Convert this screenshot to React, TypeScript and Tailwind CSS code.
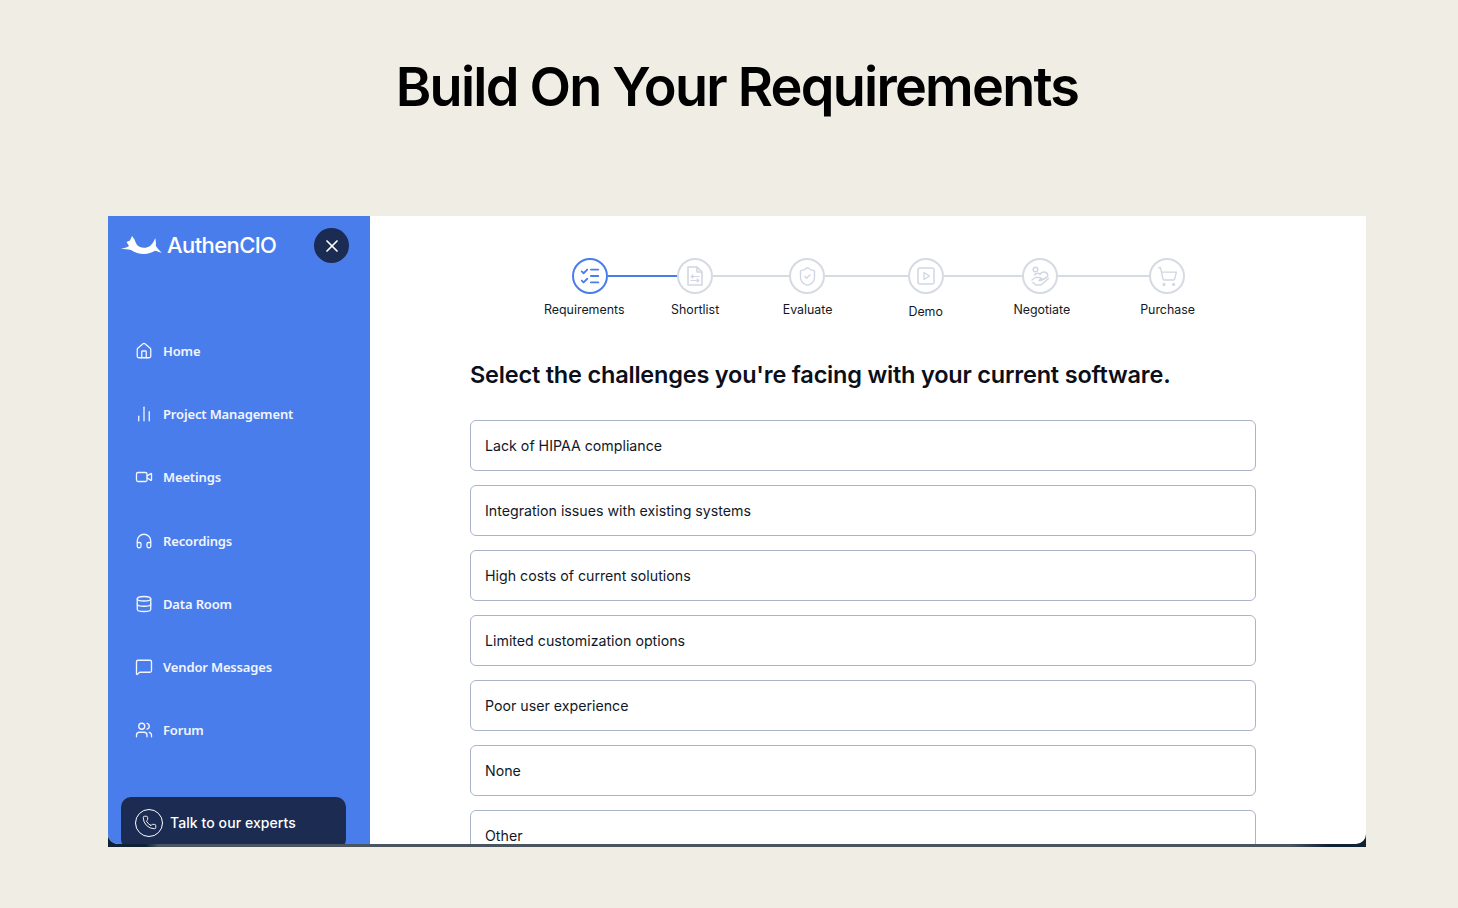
import React from "react";
import { House, ChartNoAxesColumn, Video, Headphones, Database, MessageSquare, Users, Phone, X, ListChecks, ShieldCheck, ShoppingCart } from "lucide-react";

const nav = [
  { label: "Home", Icon: House },
  { label: "Project Management", Icon: ChartNoAxesColumn },
  { label: "Meetings", Icon: Video },
  { label: "Recordings", Icon: Headphones },
  { label: "Data Room", Icon: Database },
  { label: "Vendor Messages", Icon: MessageSquare },
  { label: "Forum", Icon: Users },
];

const options = [
  "Lack of HIPAA compliance",
  "Integration issues with existing systems",
  "High costs of current solutions",
  "Limited customization options",
  "Poor user experience",
  "None",
  "Other",
];

function Logo() {
  return (
    <svg width="41" height="19" viewBox="0 0 41 19" fill="white" aria-hidden="true">
      <path d="M0 13 C3 12 6 11.5 8 10 L5.5 6 L9 4.5 L11 0 L13.5 3.5 C14.5 6 15.5 9 18 10.5 C22 12.5 26 12 29 10 C31.5 8 33 5 34.3 2 C35 6 35 8 34.8 10 C36.5 12.5 39 15 41 17 C38 16 36 15 34 14.7 C31 16.5 27 18 23 18 C18 18 14 16.5 10 14 C7 13 3 13 0 13 Z" />
    </svg>
  );
}

function DocIcon() {
  return (
    <svg width="18" height="20" viewBox="0 0 18 20" fill="none" stroke="#d1d7e2" strokeWidth="1.6" aria-hidden="true">
      <path d="M2 1 H11 L16 6 V19 H2 Z" strokeLinejoin="round" />
      <path d="M11 1 V6 H16" strokeLinejoin="round" />
      <path d="M5 10.5 H13 M5 14.5 H13 M7 9 L5 10.5 L7 12 M11 13 L13 14.5 L11 16" strokeLinecap="round" strokeLinejoin="round" strokeWidth="1.2" />
    </svg>
  );
}

function PlayBox() {
  return (
    <svg width="18" height="18" viewBox="0 0 18 18" fill="none" stroke="#d1d7e2" strokeWidth="1.5" aria-hidden="true">
      <rect x="1" y="1" width="16" height="16" rx="2" />
      <path d="M7 5.5 L12.5 9 L7 12.5 Z" strokeLinejoin="round" strokeWidth="1.3" />
    </svg>
  );
}

function HandIcon() {
  return (
    <svg width="22" height="22" viewBox="0 0 22 22" fill="none" stroke="#d1d7e2" strokeWidth="1.5" strokeLinecap="round" strokeLinejoin="round" aria-hidden="true">
      <circle cx="6.5" cy="4.5" r="2.3" />
      <path d="M5.5 10 C8 7.5 10 8 11 9.5 C12 7 15 6.5 17 7.5 C19.5 9 19 11.5 17.5 12.5 L12 15.5" />
      <path d="M3 15 L6.5 12.5 H10.5 L13 14 L10 15.5" />
      <path d="M4 17.5 L7 20 H12 L19.5 13.5" />
    </svg>
  );
}

function Circle({ active, children }: { active?: boolean; children: React.ReactNode }) {
  return (
    <div className={active
      ? "flex h-9 w-9 shrink-0 items-center justify-center rounded-full border-2 border-[#4a7dec] bg-white"
      : "flex h-9 w-9 shrink-0 items-center justify-center rounded-full border-2 border-[#d5dae3] bg-white"}>
      {children}
    </div>
  );
}

function Stepper() {
  return (
    <div className="flex flex-col">
      <div className="ml-[202px] flex items-center">
        <Circle active><ListChecks size={22} color="#4a7dec" strokeWidth={2} /></Circle>
        <div className="h-[2px] w-[69px] bg-[#4a7dec]" />
        <Circle><DocIcon /></Circle>
        <div className="h-[2px] w-[76px] bg-[#d5dae3]" />
        <Circle><ShieldCheck size={21} color="#d1d7e2" strokeWidth={1.6} /></Circle>
        <div className="h-[2px] w-[83px] bg-[#d5dae3]" />
        <Circle><PlayBox /></Circle>
        <div className="h-[2px] w-[78px] bg-[#d5dae3]" />
        <Circle><HandIcon /></Circle>
        <div className="h-[2px] w-[91px] bg-[#d5dae3]" />
        <Circle><ShoppingCart size={21} color="#d1d7e2" strokeWidth={1.6} /></Circle>
      </div>
      <div className="mt-[7px] flex items-start text-[12.4px] leading-[18px] text-[#111827]">
        <span className="ml-[174px]">Requirements</span>
        <span className="ml-[46.5px]">Shortlist</span>
        <span className="ml-[63.5px]">Evaluate</span>
        <span className="ml-[76px] mt-[2px]">Demo</span>
        <span className="ml-[70.5px]">Negotiate</span>
        <span className="ml-[70px]">Purchase</span>
      </div>
    </div>
  );
}

export default function App() {
  return (
    <div className="h-[908px] w-[1458px] overflow-hidden bg-[#f0ede5] font-['Inter',sans-serif]">
      <h1 className="pt-[52px] pl-[16px] text-center text-[54px] leading-[70px] font-[560] tracking-[-1.75px] text-black">
        Build On Your Requirements
      </h1>
      <div className="ml-[108px] mt-[94px] h-[631px] w-[1258px] bg-[linear-gradient(90deg,#0f2233_0%,#0f2233_3%,#4a5560_4%,#4a5560_94%,#0f2233_97%,#0f2233_100%)]">
        <div className="flex h-[628px] overflow-hidden rounded-b-[10px] bg-white">
          <aside className="flex w-[262px] shrink-0 flex-col bg-[#4a7dec] pl-[13px] text-white">
            <div className="mt-[12px] flex h-[35px] shrink-0 items-center">
              <Logo />
              <span className="ml-[5px] text-[22px] font-medium tracking-[-0.6px]">AuthenCIO</span>
              <div className="ml-[38px] flex h-[35px] w-[35px] items-center justify-center rounded-full bg-[#1b2b52]">
                <X size={20} color="white" strokeWidth={2} />
              </div>
            </div>
            <nav className="mt-[78px] flex shrink-0 flex-col gap-[43.2px] pl-[14px] font-['Noto_Sans',sans-serif] text-[13px] leading-[20px] font-semibold tracking-[-0.15px]">
              {nav.map(({ label, Icon }) => (
                <div key={label} className="flex items-center gap-[10px] text-[#f2f5fe]">
                  <Icon size={18} strokeWidth={1.75} />
                  <span>{label}</span>
                </div>
              ))}
            </nav>
            <div className="mt-[56.8px] flex h-[52px] w-[225px] shrink-0 items-center gap-[7px] rounded-[10px] bg-[#1b2b52] pl-[14px]">
              <div className="flex h-[28px] w-[28px] items-center justify-center rounded-full border border-white">
                <Phone size={15} strokeWidth={1.5} />
              </div>
              <span className="text-[14px] font-medium tracking-[0.08px]">Talk to our experts</span>
            </div>
          </aside>
          <main className="flex-1 pt-[42px]">
            <Stepper />
            <div className="pl-[100px]">
              <h2 className="mt-[38px] text-[23.5px] leading-[32px] font-semibold tracking-[-0.2px] text-[#0b0f19]">
                Select the challenges you're facing with your current software.
              </h2>
              <div className="mt-[29px] flex flex-col gap-[14px]">
                {options.map((o) => (
                  <div key={o} className="flex h-[51px] w-[786px] shrink-0 items-center rounded-[6px] border border-[#a9b4c6] pl-[14px] text-[14.2px] text-[#111827]">
                    {o}
                  </div>
                ))}
              </div>
            </div>
          </main>
        </div>
      </div>
    </div>
  );
}
